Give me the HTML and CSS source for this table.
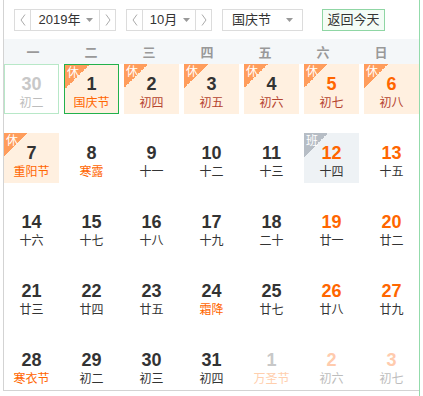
FILE: index.html
```html
<!DOCTYPE html>
<html lang="zh-CN">
<head>
<meta charset="utf-8">
<link rel="stylesheet" href="styles.css">
</head>
<body>
<div class="page">
  <div class="cal">
    <div class="toolbar">
      <div class="stepper year">
        <span class="arrow"><svg width="6" height="12" viewBox="0 0 6 12"><polyline points="5,0.5 1,6 5,11.5" fill="none" stroke="#aaa" stroke-width="1"/></svg></span>
        <span class="mid"><span>2019年</span><svg class="caret" width="7" height="4" viewBox="0 0 7 4"><polygon points="0,0 7,0 3.5,4" fill="#999"/></svg></span>
        <span class="arrow right"><svg width="6" height="12" viewBox="0 0 6 12"><polyline points="1,0.5 5,6 1,11.5" fill="none" stroke="#aaa" stroke-width="1"/></svg></span>
      </div>
      <div class="stepper month">
        <span class="arrow"><svg width="6" height="12" viewBox="0 0 6 12"><polyline points="5,0.5 1,6 5,11.5" fill="none" stroke="#aaa" stroke-width="1"/></svg></span>
        <span class="mid"><span>10月</span><svg class="caret" width="7" height="4" viewBox="0 0 7 4"><polygon points="0,0 7,0 3.5,4" fill="#999"/></svg></span>
        <span class="arrow right"><svg width="6" height="12" viewBox="0 0 6 12"><polyline points="1,0.5 5,6 1,11.5" fill="none" stroke="#aaa" stroke-width="1"/></svg></span>
      </div>
      <div class="select"><span>国庆节</span><svg class="caret" width="7" height="4" viewBox="0 0 7 4"><polygon points="0,0 7,0 3.5,4" fill="#999"/></svg></div>
      <button class="today-btn">返回今天</button>
    </div>
    <div class="weekdays">
      <span>一</span><span>二</span><span>三</span><span>四</span><span>五</span><span>六</span><span>日</span>
    </div>
    <div class="grid">
      <div class="cell other hover"><b class="num">30</b><span class="lunar">初二</span></div>
      <div class="cell rest today"><i class="badge">休</i><b class="num">1</b><span class="lunar fest">国庆节</span></div>
      <div class="cell rest"><i class="badge">休</i><b class="num">2</b><span class="lunar">初四</span></div>
      <div class="cell rest"><i class="badge">休</i><b class="num">3</b><span class="lunar">初五</span></div>
      <div class="cell rest"><i class="badge">休</i><b class="num">4</b><span class="lunar">初六</span></div>
      <div class="cell rest wkend"><i class="badge">休</i><b class="num">5</b><span class="lunar">初七</span></div>
      <div class="cell rest wkend"><i class="badge">休</i><b class="num">6</b><span class="lunar">初八</span></div>

      <div class="cell rest"><i class="badge">休</i><b class="num">7</b><span class="lunar fest">重阳节</span></div>
      <div class="cell"><b class="num">8</b><span class="lunar fest">寒露</span></div>
      <div class="cell"><b class="num">9</b><span class="lunar">十一</span></div>
      <div class="cell"><b class="num">10</b><span class="lunar">十二</span></div>
      <div class="cell"><b class="num">11</b><span class="lunar">十三</span></div>
      <div class="cell work wkend"><i class="badge">班</i><b class="num">12</b><span class="lunar">十四</span></div>
      <div class="cell wkend"><b class="num">13</b><span class="lunar">十五</span></div>

      <div class="cell"><b class="num">14</b><span class="lunar">十六</span></div>
      <div class="cell"><b class="num">15</b><span class="lunar">十七</span></div>
      <div class="cell"><b class="num">16</b><span class="lunar">十八</span></div>
      <div class="cell"><b class="num">17</b><span class="lunar">十九</span></div>
      <div class="cell"><b class="num">18</b><span class="lunar">二十</span></div>
      <div class="cell wkend"><b class="num">19</b><span class="lunar">廿一</span></div>
      <div class="cell wkend"><b class="num">20</b><span class="lunar">廿二</span></div>

      <div class="cell"><b class="num">21</b><span class="lunar">廿三</span></div>
      <div class="cell"><b class="num">22</b><span class="lunar">廿四</span></div>
      <div class="cell"><b class="num">23</b><span class="lunar">廿五</span></div>
      <div class="cell"><b class="num">24</b><span class="lunar fest">霜降</span></div>
      <div class="cell"><b class="num">25</b><span class="lunar">廿七</span></div>
      <div class="cell wkend"><b class="num">26</b><span class="lunar">廿八</span></div>
      <div class="cell wkend"><b class="num">27</b><span class="lunar">廿九</span></div>

      <div class="cell"><b class="num">28</b><span class="lunar fest">寒衣节</span></div>
      <div class="cell"><b class="num">29</b><span class="lunar">初二</span></div>
      <div class="cell"><b class="num">30</b><span class="lunar">初三</span></div>
      <div class="cell"><b class="num">31</b><span class="lunar">初四</span></div>
      <div class="cell other"><b class="num">1</b><span class="lunar fest">万圣节</span></div>
      <div class="cell other wkend"><b class="num">2</b><span class="lunar">初六</span></div>
      <div class="cell other wkend"><b class="num">3</b><span class="lunar">初七</span></div>
    </div>
  </div>
  <div class="edge"></div>
</div>
</body>
</html>
```
FILE: styles.css
```css
html, body {
  margin: 0;
  padding: 0;
  background: #fff;
}
body {
  font-family: "Liberation Sans", "Noto Sans CJK SC", sans-serif;
  color: #333;
}
.page {
  display: flex;
  align-items: flex-start;
  height: 396px;
  overflow: hidden;
}
.cal {
  margin-left: 3px;
  width: 415px;
  border-left: 1px solid #d3d3d3;
  border-bottom: 1px solid #d3d3d3;
}
.edge {
  width: 1px;
  height: 396px;
  background: #93dbab;
}
.toolbar {
  display: flex;
  align-items: flex-start;
  gap: 10px;
  height: 39px;
  box-sizing: border-box;
  padding: 9px 0 0 10px;
  font-size: 13px;
}
.stepper {
  display: flex;
  height: 22px;
  box-sizing: border-box;
  border: 1px solid #dcdcdc;
}
.stepper.year { width: 102px; }
.stepper.month { width: 86px; }
.arrow {
  width: 15px;
  flex: none;
  display: flex;
  align-items: center;
  justify-content: center;
  border-right: 1px solid #dcdcdc;
}
.arrow.right {
  border-right: none;
  border-left: 1px solid #dcdcdc;
}
.mid {
  flex: 1;
  display: flex;
  align-items: center;
  justify-content: center;
  gap: 6px;
  line-height: 20px;
  padding-left: 2px;
}
.caret { flex: none; }
.select {
  width: 81px;
  height: 22px;
  box-sizing: border-box;
  border: 1px solid #dcdcdc;
  display: flex;
  align-items: center;
  justify-content: space-between;
  padding: 0 9px 0 9px;
  line-height: 20px;
}
.today-btn {
  margin-left: 9px;
  width: 63px;
  height: 22px;
  box-sizing: border-box;
  border: 1px solid #8fd6a4;
  background: #f4fcf6;
  color: #333;
  font: 13px "Liberation Sans", "Noto Sans CJK SC", sans-serif;
  padding: 0;
  line-height: 20px;
}
.weekdays {
  display: grid;
  grid-template-columns: repeat(7, 58px);
  height: 25px;
  align-items: center;
  background: #f4f7f9;
  font-size: 13px;
  font-weight: bold;
  color: #999;
  text-align: center;
}
.grid {
  display: grid;
  grid-template-columns: repeat(7, 55px);
  grid-auto-rows: 50px;
  column-gap: 5px;
  row-gap: 19px;
}
.cell {
  position: relative;
  box-sizing: border-box;
  display: flex;
  flex-direction: column;
  align-items: center;
  padding-top: 10px;
}
.num {
  font-size: 18px;
  line-height: 20px;
  font-weight: bold;
  color: #333;
}
.lunar {
  font-size: 12px;
  line-height: 18px;
  color: #333;
}
.lunar.fest { color: #ff6600; }
.wkend .num { color: #ff6600; }
.rest { background: #fff0e0; }
.rest .lunar { color: #b5432f; }
.rest .lunar.fest { color: #ff6600; }
.work { background: #eef2f5; }
.today {
  border: 1px solid #22b14c;
  padding-top: 9px;
}
.hover {
  border: 1px solid #b8e8c8;
  padding-top: 9px;
}
.badge {
  position: absolute;
  top: 0;
  left: 0;
  width: 24px;
  height: 24px;
  box-sizing: border-box;
  padding: 2px 0 0 2px;
  font-style: normal;
  font-size: 12px;
  line-height: 12px;
  color: #fff;
  background: linear-gradient(135deg, #ff9d5c 50%, transparent 50%);
}
.work .badge {
  background: linear-gradient(135deg, #b6bdc5 50%, transparent 50%);
}
.other .num { color: #c8c8c8; }
.other .lunar { color: #bdbdbd; }
.other.wkend .num { color: #ffcbad; }
.other .lunar.fest { color: #ffcfae; }
```
